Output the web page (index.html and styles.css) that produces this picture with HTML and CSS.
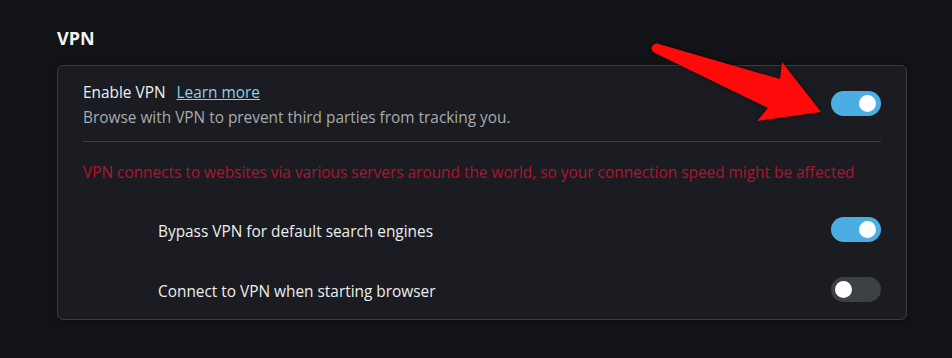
FILE: index.html
```html
<!DOCTYPE html>
<html lang="en">
<head>
<meta charset="utf-8">
<title>VPN settings</title>
<link rel="stylesheet" href="styles.css">
</head>
<body>
<main class="page">
  <h2 class="section-title">VPN</h2>
  <section class="card">
    <div class="main-row">
      <div class="main-text">
        <div class="title-line"><span class="title">Enable VPN</span><a class="learn" href="#">Learn more</a></div>
        <div class="subtitle">Browse with VPN to prevent third parties from tracking you.</div>
      </div>
      <span class="toggle on main-toggle"><span class="knob"></span></span>
    </div>
    <div class="divider"></div>
    <p class="warning">VPN connects to websites via various servers around the world, so your connection speed might be affected</p>
    <div class="sub-row">
      <span class="label">Bypass VPN for default search engines</span>
      <span class="toggle on"><span class="knob"></span></span>
    </div>
    <div class="sub-row">
      <span class="label">Connect to VPN when starting browser</span>
      <span class="toggle"><span class="knob"></span></span>
    </div>
  </section>
  <svg class="arrow" width="952" height="358" viewBox="0 0 952 358" aria-hidden="true">
    <path d="M657 43.5 L780 79 L782 62 L821 112 L757 121 L768 108 L655 53 Q650 50 652 46.5 Q654 43 657 43.5 Z" fill="#ff0a0a"/>
  </svg>
</main>
</body>
</html>
```
FILE: styles.css
```css
html, body {
  margin: 0;
  padding: 0;
  background: #121316;
}
body {
  font-family: "Open Sans", "Noto Sans", sans-serif;
  color: #eeeeee;
}
.page {
  position: relative;
  padding: 26px 45px 37px 57px;
  width: 952px;
  height: 358px;
  box-sizing: border-box;
}
.section-title {
  margin: 0 0 15px 0;
  font-size: 18px;
  line-height: 24px;
  font-weight: 700;
  color: #f2f2f2;
}
.card {
  border: 1px solid #3a3c41;
  border-radius: 6px;
  background: #1a1c21;
  padding: 0 25px 0 25px;
  box-shadow: 0 2px 6px rgba(0,0,0,0.35);
}
.main-row {
  display: flex;
  align-items: flex-start;
  justify-content: space-between;
  padding: 17px 0 13px 0;
}
.main-toggle {
  margin-top: 8px;
}
.title-line {
  font-size: 15.4px;
  line-height: 20px;
  display: flex;
  gap: 11px;
}
.title {
  color: #f0f0f0;
}
.learn {
  color: #8fcdf0;
  text-decoration: underline;
}
.subtitle {
  margin-top: 5px;
  font-size: 15.4px;
  line-height: 20px;
  color: #a8aaae;
}
.divider {
  height: 1px;
  background: #3d3f44;
}
.warning {
  margin: 21px 0 16px 0;
  font-size: 15.4px;
  line-height: 20px;
  color: #b3132f;
}
.sub-row {
  display: flex;
  align-items: center;
  justify-content: space-between;
  height: 60px;
  padding-left: 75px;
}
.label {
  font-size: 15.4px;
  line-height: 20px;
  padding-top: 5px;
  color: #eeeeee;
}
.toggle {
  display: flex;
  align-items: center;
  width: 50px;
  height: 25px;
  border-radius: 13px;
  background: #3d4044;
  padding: 0 4px;
  box-sizing: border-box;
  justify-content: flex-start;
}
.toggle.on {
  background: #4aaee3;
  justify-content: flex-end;
  padding-right: 5px;
}
.knob {
  width: 17px;
  height: 17px;
  border-radius: 50%;
  background: #ffffff;
}
.arrow {
  position: absolute;
  left: 0;
  top: 0;
  pointer-events: none;
  filter: drop-shadow(0 0 2px rgba(0,0,0,0.6));
}
```
